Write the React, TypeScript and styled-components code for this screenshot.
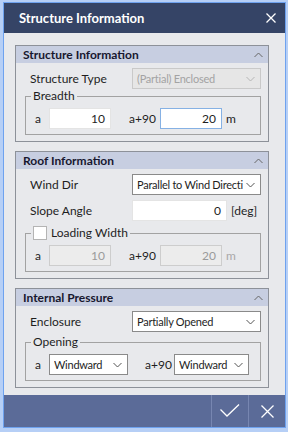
import styled, { createGlobalStyle } from "styled-components";

const GlobalStyle = createGlobalStyle`
  html, body {
    margin: 0;
    padding: 0;
  }
  body {
    width: 288px;
    height: 432px;
    overflow: hidden;
    background: #b6cff6;
    font-family: Lato, "Liberation Sans", sans-serif;
    font-size: 12px;
    color: #1e1e1e;
  }
  * {
    box-sizing: border-box;
  }
`;

function Chevron({ up, color = "#555" }: { up?: boolean; color?: string }) {
  return (
    <svg width="9" height="6" viewBox="0 0 9 6">
      <polyline
        points={up ? "0.5,5 4.5,1 8.5,5" : "0.5,1 4.5,5 8.5,1"}
        fill="none"
        stroke={color}
        strokeWidth="1"
      />
    </svg>
  );
}

function CloseIcon({ size }: { size: number }) {
  return (
    <svg width={size} height={size} viewBox={`0 0 ${size} ${size}`}>
      <path
        d={`M0.5,0.5 L${size - 0.5},${size - 0.5} M${size - 0.5},0.5 L0.5,${size - 0.5}`}
        stroke="#fff"
        strokeWidth="1.3"
        fill="none"
      />
    </svg>
  );
}

function Select({
  value,
  width,
  disabled,
}: {
  value: string;
  width?: number;
  disabled?: boolean;
}) {
  return (
    <SelectBox $width={width} $disabled={disabled}>
      <span>{value}</span>
      <Chevron color={disabled ? "#b5b5b5" : "#555"} />
    </SelectBox>
  );
}

function Panel({
  title,
  gap,
  children,
}: {
  title: string;
  gap: number;
  children: React.ReactNode;
}) {
  return (
    <PanelBox>
      <PanelHeader>
        <span>{title}</span>
        <Chevron up color="#666" />
      </PanelHeader>
      <PanelBody $gap={gap}>{children}</PanelBody>
    </PanelBox>
  );
}

export default function App() {
  return (
    <>
      <GlobalStyle />
      <Frame>
        <Window>
          <TitleBar>
            <Title>Structure Information</Title>
            <CloseIcon size={10} />
          </TitleBar>

          <Content>
            <Panel title="Structure Information" gap={0}>
              <FieldRow>
                <Label>Structure Type</Label>
                <Select value="(Partial) Enclosed" disabled />
              </FieldRow>
              <Group>
                <Legend>Breadth</Legend>
                <GroupInner>
                  <AxisLabel $width={14}>a</AxisLabel>
                  <NumInput $width={62}>10</NumInput>
                  <AxisLabel $width={31} $space={18}>
                    a+90
                  </AxisLabel>
                  <NumInput $width={62} $focused>
                    20
                  </NumInput>
                  <Unit>m</Unit>
                </GroupInner>
              </Group>
            </Panel>

            <Panel title="Roof Information" gap={5}>
              <FieldRow>
                <Label>Wind Dir</Label>
                <Select value="Parallel to Wind Directi" />
              </FieldRow>
              <FieldRow>
                <Label>Slope Angle</Label>
                <InputWithUnit>
                  <NumInput $width={95}>0</NumInput>
                  <Unit>[deg]</Unit>
                </InputWithUnit>
              </FieldRow>
              <Group>
                <Legend>
                  <CheckBox />
                  Loading Width
                </Legend>
                <GroupInner>
                  <AxisLabel $width={14}>a</AxisLabel>
                  <NumInput $width={62} $disabled>
                    10
                  </NumInput>
                  <AxisLabel $width={31} $space={18}>
                    a+90
                  </AxisLabel>
                  <NumInput $width={62} $disabled>
                    20
                  </NumInput>
                  <Unit $disabled>m</Unit>
                </GroupInner>
              </Group>
            </Panel>

            <Panel title="Internal Pressure" gap={3}>
              <FieldRow>
                <Label>Enclosure</Label>
                <Select value="Partially Opened" />
              </FieldRow>
              <Group>
                <Legend>Opening</Legend>
                <GroupInner>
                  <AxisLabel $width={14}>a</AxisLabel>
                  <Select value="Windward" width={79} />
                  <AxisLabel $width={29} $space={17}>
                    a+90
                  </AxisLabel>
                  <Select value="Windward" width={75} />
                </GroupInner>
              </Group>
            </Panel>
          </Content>

          <Footer>
            <FooterButton>
              <svg width="20" height="14" viewBox="0 0 20 14">
                <polyline
                  points="0.5,5.5 7,12 19,0.5"
                  fill="none"
                  stroke="#fff"
                  strokeWidth="1.3"
                />
              </svg>
            </FooterButton>
            <FooterButton>
              <CloseIcon size={13} />
            </FooterButton>
          </Footer>
        </Window>
      </Frame>
    </>
  );
}

const Frame = styled.div`
  width: 288px;
  height: 432px;
  padding: 3px 3px 5px 4px;
  background: #b6cff6;
`;

const Window = styled.div`
  height: 100%;
  display: flex;
  flex-direction: column;
  box-shadow: 0 0 0 1px #6ea2ef;
`;

const TitleBar = styled.div`
  height: 30px;
  flex: none;
  display: flex;
  align-items: center;
  justify-content: space-between;
  padding: 0 9px 0 15px;
  background: #354466;
`;

const Title = styled.div`
  color: #fff;
  font-weight: bold;
  font-size: 13px;
`;

const Content = styled.div`
  flex: 1;
  display: flex;
  flex-direction: column;
  gap: 9px;
  padding: 12px 16px 0 11px;
  background: #e8e9ec;
`;

const PanelBox = styled.div`
  border: 1px solid #8d9199;
`;

const PanelHeader = styled.div`
  height: 17px;
  display: flex;
  align-items: center;
  justify-content: space-between;
  padding: 0 5px 0 7px;
  background: #c7cee1;
  color: #17172f;
  font-weight: bold;
  font-size: 12px;
`;

const PanelBody = styled.div<{ $gap: number }>`
  display: flex;
  flex-direction: column;
  gap: ${(p) => p.$gap}px;
  padding: 5px 7px 6px 9px;
`;

const FieldRow = styled.div`
  display: grid;
  grid-template-columns: 107px minmax(0, 1fr);
  align-items: center;
`;

const Label = styled.div`
  padding-left: 5px;
`;

const SelectBox = styled.div<{ $width?: number; $disabled?: boolean }>`
  width: ${(p) => (p.$width ? `${p.$width}px` : "auto")};
  min-width: 0;
  flex: none;
  height: 21px;
  display: flex;
  align-items: center;
  gap: 3px;
  padding: 0 5px 0 4px;
  border: 1px solid ${(p) => (p.$disabled ? "#c9c9c9" : "#8a8a8a")};
  background: ${(p) => (p.$disabled ? "#e6e6e6" : "#fff")};
  color: ${(p) => (p.$disabled ? "#a3a3a3" : "#1e1e1e")};
  font-size: 11px;
  letter-spacing: -0.25px;

  & > span {
    flex: 1;
    min-width: 0;
    white-space: nowrap;
    overflow: hidden;
  }
  & > svg {
    flex: none;
  }
`;

const InputWithUnit = styled.div`
  display: flex;
  align-items: center;
`;

const NumInput = styled.div<{
  $width: number;
  $focused?: boolean;
  $disabled?: boolean;
}>`
  width: ${(p) => p.$width}px;
  flex: none;
  height: 21px;
  display: flex;
  align-items: center;
  justify-content: flex-end;
  padding-right: 5px;
  background: ${(p) => (p.$disabled ? "#ececec" : "#fff")};
  border: 1px solid
    ${(p) => (p.$focused ? "#86b1e4" : p.$disabled ? "#cdcdcd" : "#e4e4e4")};
  color: ${(p) => (p.$disabled ? "#9a9a9a" : "#1e1e1e")};
`;

const Unit = styled.span<{ $disabled?: boolean }>`
  margin-left: 4px;
  color: ${(p) => (p.$disabled ? "#a8a8a8" : "#1e1e1e")};
`;

const Group = styled.fieldset`
  margin: 0;
  padding: 0;
  min-width: 0;
  border: 1px solid #a2a2a2;
`;

const Legend = styled.legend`
  margin-left: 5px;
  padding: 0 2px;
  line-height: 14px;
  display: flex;
  align-items: center;
  gap: 4px;
`;

const CheckBox = styled.span`
  width: 14px;
  height: 14px;
  background: #fff;
  border: 1px solid #b4b4b4;
`;

const GroupInner = styled.div`
  display: flex;
  align-items: center;
  padding: 5px 0 5px 9px;
`;

const AxisLabel = styled.span<{ $width: number; $space?: number }>`
  width: ${(p) => p.$width}px;
  margin-left: ${(p) => p.$space ?? 0}px;
  flex: none;
  white-space: nowrap;
`;

const Footer = styled.div`
  height: 32px;
  flex: none;
  display: flex;
  justify-content: flex-end;
  background: #5b6b98;
`;

const FooterButton = styled.div`
  width: 37px;
  display: flex;
  align-items: center;
  justify-content: center;
  border-left: 1px solid #7786b1;
`;
